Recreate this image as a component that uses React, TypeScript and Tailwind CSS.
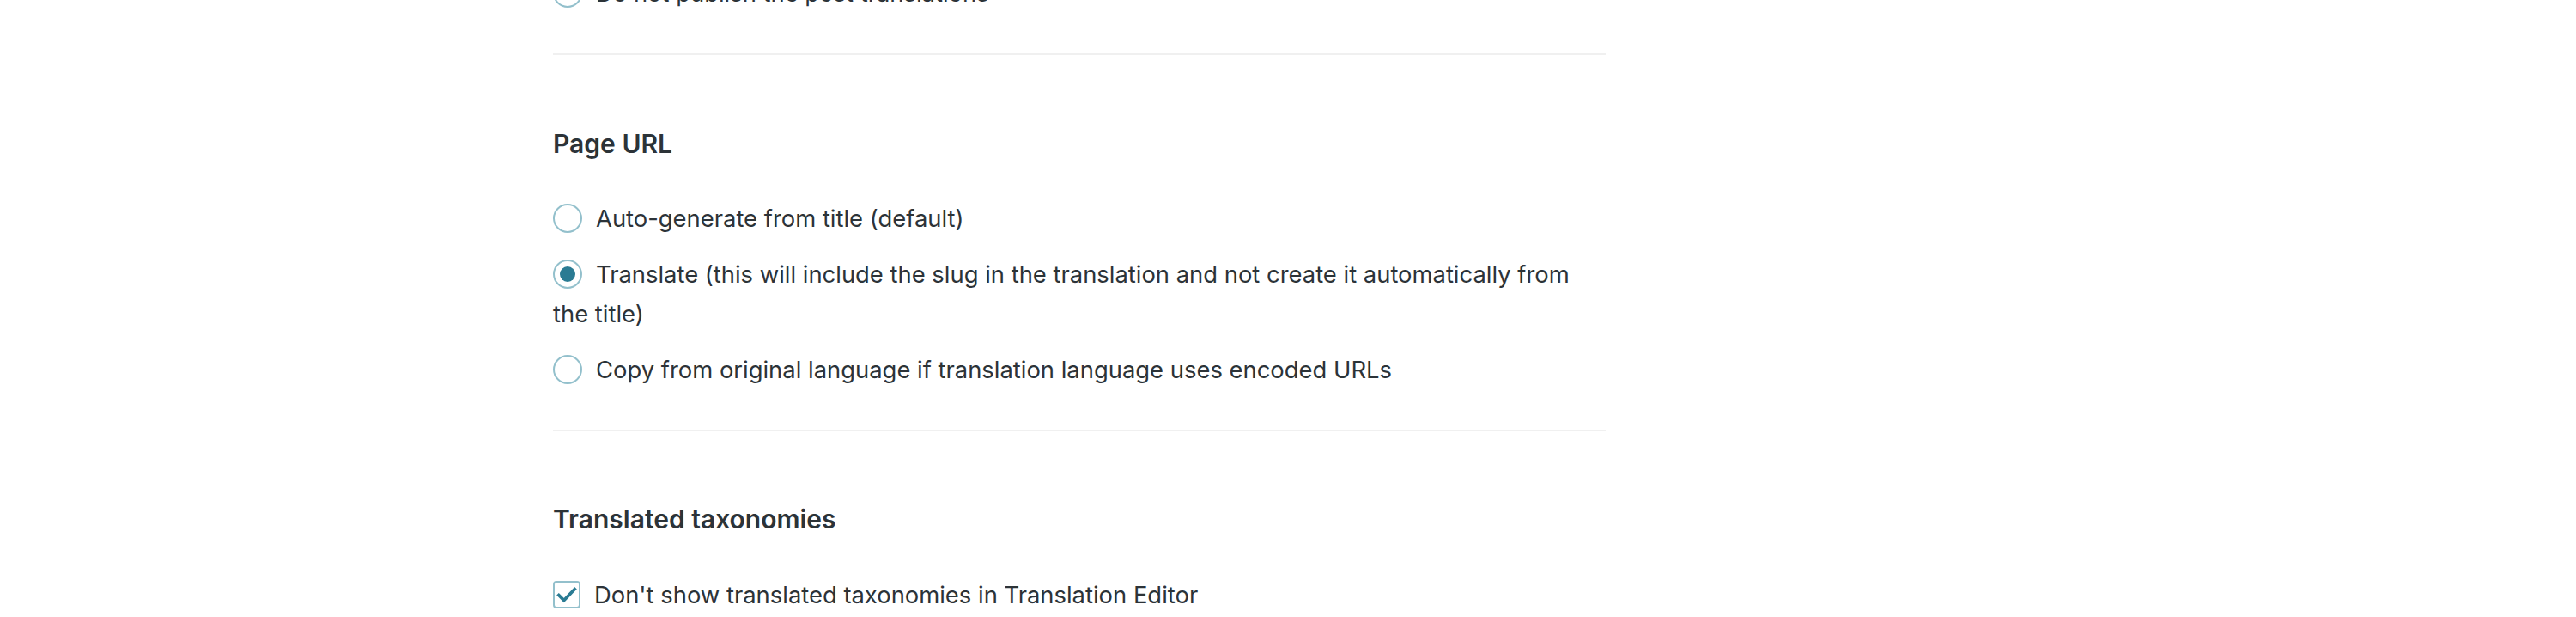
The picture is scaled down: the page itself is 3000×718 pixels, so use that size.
import React from "react";

const Radio = ({ checked }: { checked?: boolean }) => (
  <span className="inline-flex align-middle -mt-[6px] items-center justify-center w-[34px] h-[34px] rounded-full border-[2.5px] border-[#93c0cc] bg-white mr-[16px]">
    {checked && <span className="block w-[18px] h-[18px] rounded-full bg-[#2a7b93]" />}
  </span>
);

const Checkbox = () => (
  <span className="inline-flex align-middle -mt-[6px] items-center justify-center w-[32px] h-[32px] rounded-[4px] border-[2.5px] border-[#93c0cc] bg-white mr-[16px]">
    <svg width="26" height="26" viewBox="0 0 24 24" fill="none">
      <path d="M3.5 12.5 L9 18 L20.5 6" stroke="#2a7b93" strokeWidth="3.4" strokeLinecap="square" />
    </svg>
  </span>
);

const Divider = () => <div className="h-[2px] bg-[#f0f0f0]" />;

export default function App() {
  return (
    <div className="w-[3000px] h-[718px] overflow-hidden bg-white" style={{ fontFamily: "Inter, 'Noto Sans', sans-serif" }}>
      <div className="ml-[644px] w-[1226px] flex flex-col text-[27.4px] leading-[46px] text-[#2c3338]">
        <p className="-mt-[31px] mb-[47px]">
          <Radio />
          Do not publish the post translations
        </p>
        <Divider />
        <section className="flex flex-col pt-[83px] pb-[47px]">
          <h2 className="text-[30px] leading-[40px] font-semibold mb-[44px]">Page URL</h2>
          <div className="flex flex-col gap-[19px]">
            <p>
              <Radio />
              Auto-generate from title (default)
            </p>
            <p>
              <Radio checked />
              Translate (this will include the slug in the translation and not create it automatically from the title)
            </p>
            <p>
              <Radio />
              Copy from original language if translation language uses encoded URLs
            </p>
          </div>
        </section>
        <Divider />
        <section className="flex flex-col pt-[82px]">
          <h2 className="text-[30px] leading-[40px] font-semibold mb-[45px]">Translated taxonomies</h2>
          <p>
            <Checkbox />
            Don't show translated taxonomies in Translation Editor
          </p>
        </section>
      </div>
    </div>
  );
}
